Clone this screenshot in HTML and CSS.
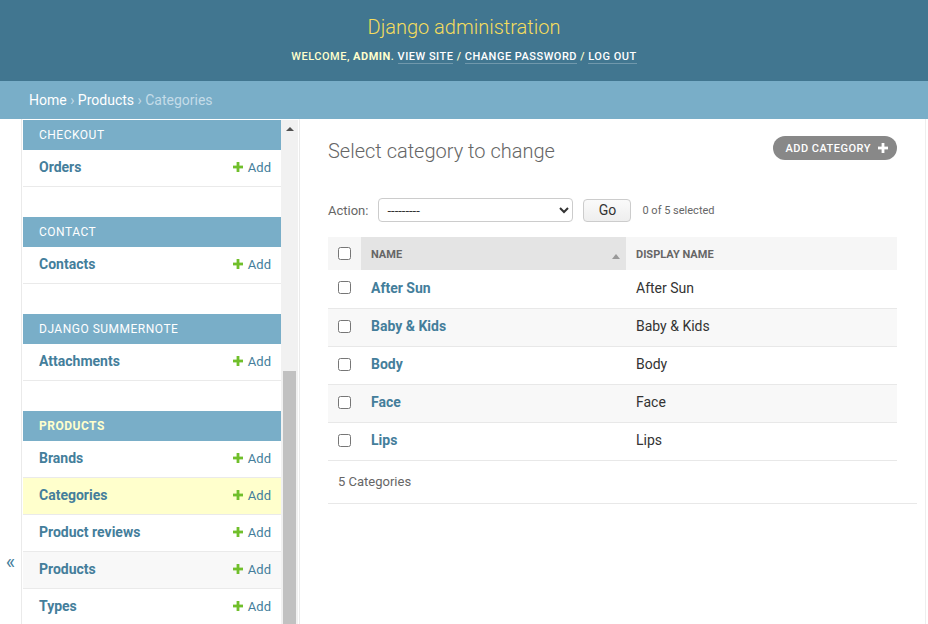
FILE: index.html
```html
<!DOCTYPE html>
<html lang="en">
<head>
<meta charset="utf-8">
<title>Select category to change | Django site admin</title>
<link rel="stylesheet" href="styles.css">
</head>
<body>
<header class="header">
  <h1 class="site-name">Django administration</h1>
  <div class="user-tools">Welcome, <strong>admin</strong>. <a href="#">View site</a> / <a href="#">Change password</a> / <a href="#">Log out</a></div>
</header>
<nav class="breadcrumbs"><a href="#">Home</a> › <a href="#">Products</a> › Categories</nav>
<div class="main">
  <div class="toggle"><span class="toggle-icon">«</span></div>
  <aside class="sidebar">
    <div class="modules">
      <section class="module">
        <div class="caption">Checkout</div>
        <div class="mrow"><a class="model" href="#">Orders</a><a class="add" href="#"><svg class="plus" viewBox="0 0 10 10"><rect x="3.6" y="0" width="2.8" height="10"/><rect x="0" y="3.6" width="10" height="2.8"/></svg>Add</a></div>
      </section>
      <section class="module">
        <div class="caption">Contact</div>
        <div class="mrow"><a class="model" href="#">Contacts</a><a class="add" href="#"><svg class="plus" viewBox="0 0 10 10"><rect x="3.6" y="0" width="2.8" height="10"/><rect x="0" y="3.6" width="10" height="2.8"/></svg>Add</a></div>
      </section>
      <section class="module">
        <div class="caption">Django Summernote</div>
        <div class="mrow"><a class="model" href="#">Attachments</a><a class="add" href="#"><svg class="plus" viewBox="0 0 10 10"><rect x="3.6" y="0" width="2.8" height="10"/><rect x="0" y="3.6" width="10" height="2.8"/></svg>Add</a></div>
      </section>
      <section class="module">
        <div class="caption current">Products</div>
        <div class="mrow"><a class="model" href="#">Brands</a><a class="add" href="#"><svg class="plus" viewBox="0 0 10 10"><rect x="3.6" y="0" width="2.8" height="10"/><rect x="0" y="3.6" width="10" height="2.8"/></svg>Add</a></div>
        <div class="mrow current-model"><a class="model" href="#">Categories</a><a class="add" href="#"><svg class="plus" viewBox="0 0 10 10"><rect x="3.6" y="0" width="2.8" height="10"/><rect x="0" y="3.6" width="10" height="2.8"/></svg>Add</a></div>
        <div class="mrow"><a class="model" href="#">Product reviews</a><a class="add" href="#"><svg class="plus" viewBox="0 0 10 10"><rect x="3.6" y="0" width="2.8" height="10"/><rect x="0" y="3.6" width="10" height="2.8"/></svg>Add</a></div>
        <div class="mrow hover"><a class="model" href="#">Products</a><a class="add" href="#"><svg class="plus" viewBox="0 0 10 10"><rect x="3.6" y="0" width="2.8" height="10"/><rect x="0" y="3.6" width="10" height="2.8"/></svg>Add</a></div>
        <div class="mrow"><a class="model" href="#">Types</a><a class="add" href="#"><svg class="plus" viewBox="0 0 10 10"><rect x="3.6" y="0" width="2.8" height="10"/><rect x="0" y="3.6" width="10" height="2.8"/></svg>Add</a></div>
      </section>
    </div>
    <div class="scrollbar">
      <div class="sb-arrow"><span class="sb-tri"></span></div>
      <div class="sb-space"></div>
      <div class="sb-thumb"></div>
    </div>
  </aside>
  <main class="content">
    <div class="title-row">
      <h1 class="page-title">Select category to change</h1>
      <a class="object-tool" href="#">Add category<svg class="plus-w" viewBox="0 0 10 10"><rect x="3.6" y="0" width="2.8" height="10"/><rect x="0" y="3.6" width="10" height="2.8"/></svg></a>
    </div>
    <div class="actions">
      <label class="action-label">Action:</label>
      <select class="action-select"><option>---------</option></select>
      <button class="go-btn" type="button">Go</button>
      <span class="counter">0 of 5 selected</span>
    </div>
    <table class="results">
      <colgroup><col class="c-check"><col class="c-name"><col class="c-disp"></colgroup>
      <thead>
        <tr>
          <th class="th-check"><input type="checkbox"></th>
          <th class="sorted"><div class="th-inner"><span>Name</span><span class="sort-arrow"></span></div></th>
          <th>Display name</th>
        </tr>
      </thead>
      <tbody>
        <tr><td class="td-check"><input type="checkbox"></td><th class="name"><a href="#">After Sun</a></th><td>After Sun</td></tr>
        <tr class="alt"><td class="td-check"><input type="checkbox"></td><th class="name"><a href="#">Baby &amp; Kids</a></th><td>Baby &amp; Kids</td></tr>
        <tr><td class="td-check"><input type="checkbox"></td><th class="name"><a href="#">Body</a></th><td>Body</td></tr>
        <tr class="alt"><td class="td-check"><input type="checkbox"></td><th class="name"><a href="#">Face</a></th><td>Face</td></tr>
        <tr><td class="td-check"><input type="checkbox"></td><th class="name"><a href="#">Lips</a></th><td>Lips</td></tr>
      </tbody>
    </table>
    <p class="paginator">5 Categories</p>
  </main>
</div>
</body>
</html>
```
FILE: styles.css
```css
* { box-sizing: border-box; }
html, body { margin: 0; padding: 0; }
body {
  width: 928px;
  height: 624px;
  overflow: hidden;
  font-family: Roboto, "Liberation Sans", sans-serif;
  color: #333;
  background: #fff;
  font-size: 14px;
}
a { text-decoration: none; }

.header {
  background: #417690;
  height: 81px;
  padding-top: 15px;
  text-align: center;
  color: #ffc;
}
.site-name {
  margin: 0 0 11px;
  font-size: 20px;
  font-weight: 300;
  line-height: 24px;
  color: #f5dd5d;
}
.user-tools {
  font-size: 11px;
  line-height: 14px;
  letter-spacing: 0.5px;
  text-transform: uppercase;
  font-weight: 500;
}
.user-tools strong { font-weight: 700; }
.user-tools a {
  color: #fff;
  border-bottom: 1px solid rgba(255, 255, 255, 0.25);
}

.breadcrumbs {
  background: #79aec8;
  height: 38px;
  padding: 10px 29px;
  font-size: 14px;
  line-height: 18px;
  color: #c4dce8;
}
.breadcrumbs a { color: #fff; }

.main {
  display: flex;
  height: 505px;
  overflow: hidden;
}

.toggle {
  width: 22px;
  flex: none;
  border-right: 1px solid #eaeaea;
  padding-top: 433px;
  text-align: center;
}
.toggle-icon {
  display: block;
  font-size: 20px;
  line-height: 20px;
  color: #447e9b;
}

.sidebar {
  width: 277px;
  flex: none;
  display: flex;
  border-top: 1px solid #fff;
  border-right: 1px solid #eaeaea;
  margin-left: 1px;
}
.modules {
  width: 258px;
  flex: none;
}
.module { margin-bottom: 30px; }
.caption {
  background: #79aec8;
  height: 30px;
  line-height: 30px;
  padding-left: 16px;
  font-size: 12px;
  letter-spacing: 0.5px;
  text-transform: uppercase;
  color: #fff;
}
.caption.current { color: #ffc; font-weight: 700; }
.mrow {
  height: 37px;
  border-bottom: 1px solid #eaeaea;
  display: flex;
  align-items: center;
  justify-content: space-between;
  padding: 0 10px 2px 16px;
}
.mrow.current-model { background: #ffc; }
.mrow.hover { background: #f8f8f8; }
.model {
  font-size: 14px;
  font-weight: 700;
  color: #447e9b;
}
.add {
  font-size: 13px;
  color: #447e9b;
  display: flex;
  align-items: center;
}
.plus {
  width: 10px;
  height: 10px;
  fill: #70bf2b;
  margin-right: 5px;
}

.scrollbar {
  width: 17px;
  flex: none;
  background: #f1f1f1;
  display: flex;
  flex-direction: column;
  align-items: center;
}
.sb-arrow {
  height: 17px;
  width: 100%;
  display: flex;
  justify-content: center;
  align-items: center;
}
.sb-tri {
  width: 0;
  height: 0;
  border-left: 4px solid transparent;
  border-right: 4px solid transparent;
  border-bottom: 4px solid #505050;
}
.sb-space { height: 234px; flex: none; }
.sb-thumb {
  width: 13px;
  flex: 1;
  background: #c1c1c1;
}

.content {
  flex: 1;
  padding: 20px 28px 0 28px;
  border-right: 1px solid #eee;
  margin-right: 2px;
  min-width: 0;
}
.title-row {
  display: flex;
  justify-content: space-between;
  align-items: flex-start;
}
.page-title {
  margin: 0;
  font-size: 20px;
  line-height: 24px;
  font-weight: 300;
  color: #666;
}
.object-tool {
  margin-top: -3px;
  height: 24px;
  border-radius: 15px;
  background: #888;
  color: #fff;
  font-size: 11px;
  font-weight: 500;
  letter-spacing: 0.5px;
  text-transform: uppercase;
  padding: 0 9px 0 12px;
  display: flex;
  align-items: center;
}
.plus-w {
  width: 10px;
  height: 10px;
  fill: #fff;
  margin-left: 7px;
}

.actions {
  margin-top: 35px;
  height: 24px;
  display: flex;
  align-items: center;
}
.action-label {
  font-size: 13px;
  color: #666;
  margin-right: 10px;
}
.action-select {
  width: 195px;
  height: 24px;
  border: 1px solid #ccc;
  border-radius: 4px;
  background: #fff;
  font-family: Roboto, "Liberation Sans", sans-serif;
  font-size: 13px;
  color: #333;
  padding: 0 4px;
}
.go-btn {
  margin-left: 10px;
  width: 48px;
  height: 23px;
  border: 1px solid #ccc;
  border-radius: 4px;
  background: linear-gradient(#fafafa, #eee);
  font-family: Roboto, "Liberation Sans", sans-serif;
  font-size: 14px;
  color: #333;
  padding: 0;
}
.counter {
  margin-left: 11px;
  font-size: 11px;
  color: #666;
}

.results {
  margin-top: 15px;
  width: 569px;
  border-collapse: collapse;
  table-layout: fixed;
}
.c-check { width: 33px; }
.c-name { width: 265px; }
.results thead th {
  height: 33px;
  background: #f6f6f6;
  font-size: 11px;
  font-weight: 700;
  text-transform: uppercase;
  color: #666;
  text-align: left;
  padding: 2px 10px 0;
  vertical-align: middle;
}
.results thead th.sorted { background: #e4e4e4; padding-right: 6px; }
.th-inner {
  display: flex;
  align-items: center;
  justify-content: space-between;
}
.sort-arrow {
  width: 0;
  height: 0;
  border-left: 4px solid transparent;
  border-right: 4px solid transparent;
  border-bottom: 5px solid #999;
  margin-top: 3px;
}
.results input[type="checkbox"] {
  margin: 0;
  width: 13px;
  height: 13px;
  display: block;
}
.results thead th.th-check { padding: 0 10px; }
.results tbody td,
.results tbody th {
  height: 38px;
  border-bottom: 1px solid #e8e8e8;
  padding: 0 10px 2px;
  font-size: 14px;
  text-align: left;
  vertical-align: middle;
  color: #333;
  font-weight: 400;
}
.results tbody th.name a {
  font-weight: 700;
  color: #447e9b;
}
.results tbody tr.alt td,
.results tbody tr.alt th { background: #f8f8f8; }

.paginator {
  margin: 0 -20px 0 0;
  padding: 10px 10px;
  line-height: 22px;
  font-size: 13px;
  color: #666;
  border-bottom: 1px solid #e8e8e8;
}
```
